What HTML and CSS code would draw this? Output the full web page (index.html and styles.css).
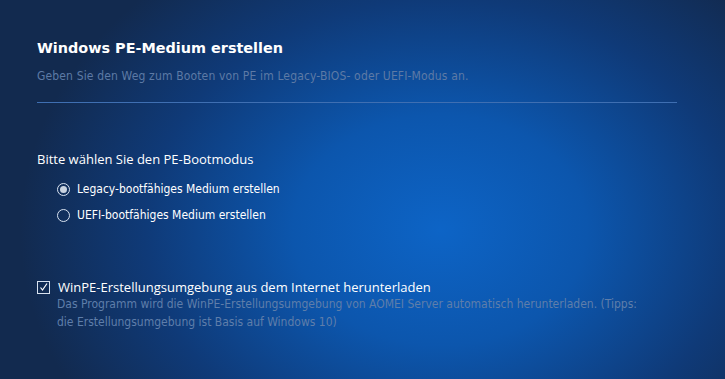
FILE: index.html
```html
<!DOCTYPE html>
<html lang="de">
<head>
<meta charset="UTF-8">
<meta name="viewport" content="width=device-width, initial-scale=1.0">
<title>Windows PE-Medium erstellen</title>
<link rel="stylesheet" href="styles.css">
</head>
<body>
<div class="wizard">
<div class="header">
<h1 class="title">Windows PE-Medium erstellen</h1>
<p class="subtitle">Geben Sie den Weg zum Booten von PE im Legacy-BIOS- oder UEFI-Modus an.</p>
</div>
<div class="section">
<div class="section-label">Bitte wählen Sie den PE-Bootmodus</div>
<label class="radio-row">
<span class="radio checked"></span>
<span class="radio-text">Legacy-bootfähiges Medium erstellen</span>
</label>
<label class="radio-row">
<span class="radio"></span>
<span class="radio-text">UEFI-bootfähiges Medium erstellen</span>
</label>
</div>
<div class="download">
<label class="check-row">
<span class="checkbox">
<svg width="11" height="11" viewBox="0 0 11 11"><path d="M2.5 5.5 L4.5 8 L9 1.5" fill="none" stroke="#fff" stroke-width="1.2"/></svg>
</span>
<span class="check-text">WinPE-Erstellungsumgebung aus dem Internet herunterladen</span>
</label>
<p class="note">Das Programm wird die WinPE-Erstellungsumgebung von AOMEI Server automatisch herunterladen. (Tipps:<br>die Erstellungsumgebung ist Basis auf Windows 10)</p>
</div>
</div>
</body>
</html>
```

FILE: styles.css
```css
html, body {
height: 100%;
}
body {
margin: 0;
font-family: 'DejaVu Sans Condensed', 'DejaVu Sans', sans-serif;
color: #fff;
background-color: #122849;
background-image: radial-gradient(ellipse 420px 330px at 440px 230px, #0d64c6 0%, #0c56ad 35%, #0f3a78 70%, #122a4f 100%);
overflow: hidden;
}
.wizard {
padding: 38px 48px 0 37px;
}
.header {
border-bottom: 1px solid #3f6fb2;
padding-bottom: 18px;
}
.title {
margin: 0;
font-family: 'DejaVu Sans', sans-serif;
font-size: 14.4px;
font-weight: bold;
line-height: 20px;
}
.subtitle {
margin: 10px 0 0;
font-size: 12px;
line-height: 16px;
letter-spacing: 0.15px;
color: #5d7aa5;
}
.section {
margin-top: 47px;
}
.section-label {
font-family: 'Open Sans', sans-serif;
font-size: 13px;
line-height: 18px;
margin-bottom: 8px;
}
.radio-row {
display: flex;
align-items: center;
gap: 7px;
padding-left: 20px;
height: 26px;
font-size: 12px;
}
.radio {
width: 11px;
height: 11px;
border: 1px solid #d8e2f0;
border-radius: 50%;
display: flex;
align-items: center;
justify-content: center;
}
.radio.checked::after {
content: '';
width: 7px;
height: 7px;
border-radius: 50%;
background-color: #c9d3e0;
}
.download {
margin-top: 49px;
}
.check-row {
display: flex;
align-items: center;
gap: 8px;
height: 20px;
}
.checkbox {
width: 11px;
height: 11px;
border: 1px solid #d8e2f0;
display: flex;
}
.check-text {
font-family: 'Open Sans', sans-serif;
font-size: 13px;
}
.note {
margin: -2px 0 0 20px;
font-size: 12px;
line-height: 18px;
color: #5f7eaa;
}
```
